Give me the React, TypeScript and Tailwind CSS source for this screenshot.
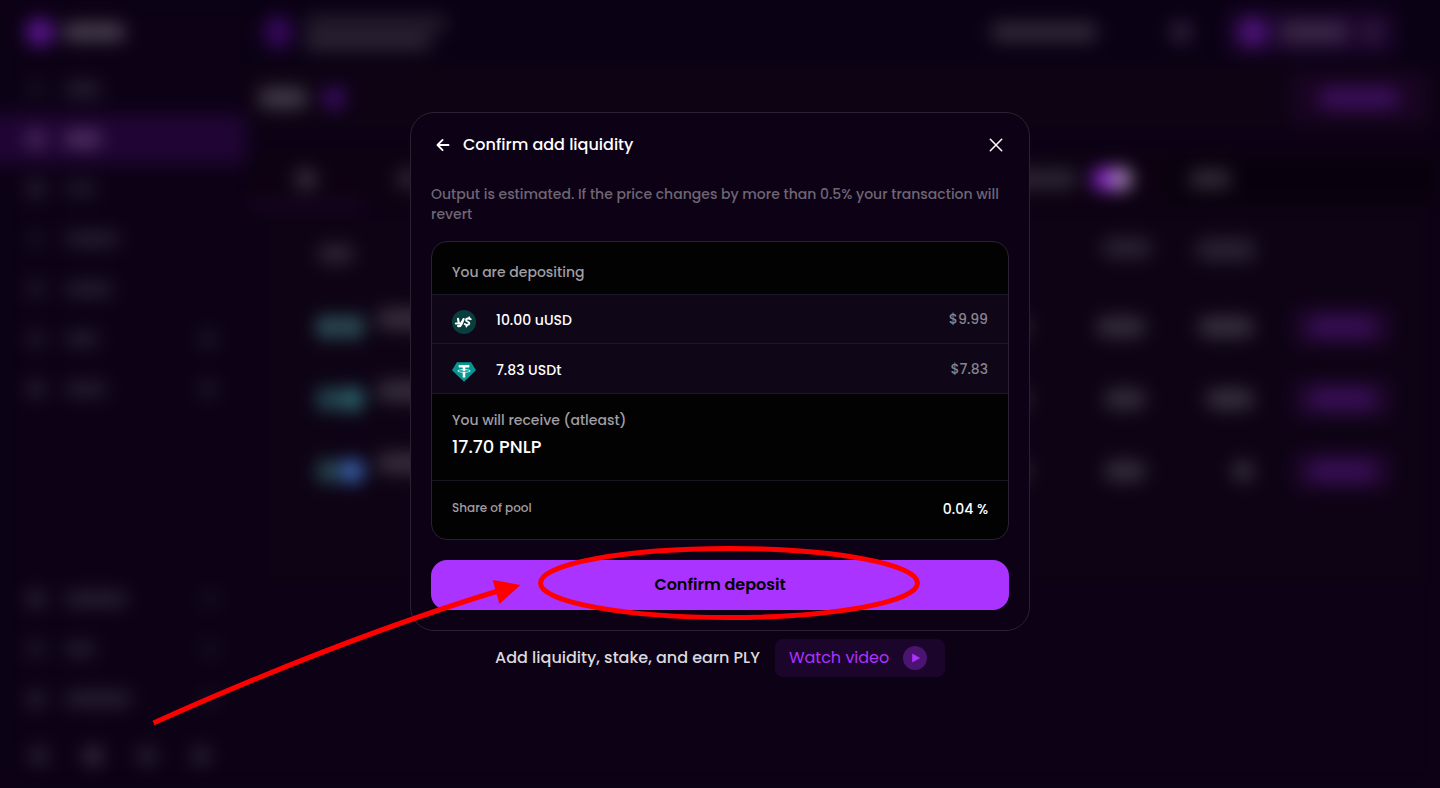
import React from "react";

type BarProps = { className: string };

/** Placeholder block used by the defocused page behind the dialog. */
function Bar({ className }: BarProps) {
  return <span className={`block shrink-0 rounded-full ${className}`} />;
}

const mainNav = [
  { icon: "bg-[#15101f]", label: "w-[38px] bg-[#251e2f]", chevron: false, active: false },
  { icon: "bg-[#4b2c60]", label: "w-[38px] bg-[#523466]", chevron: false, active: true },
  { icon: "bg-[#271f31]", label: "w-[34px] bg-[#1f1829]", chevron: false, active: false },
  { icon: "bg-[#15101f]", label: "w-[56px] bg-[#251d2f]", chevron: false, active: false },
  { icon: "bg-[#20182b]", label: "w-[50px] bg-[#251d2f]", chevron: false, active: false },
  { icon: "bg-[#20182b]", label: "w-[36px] bg-[#251d2f]", chevron: true, active: false },
  { icon: "bg-[#271f31]", label: "w-[44px] bg-[#251d2f]", chevron: true, active: false },
];

const footerNav = [
  { icon: "bg-[#2a2235]", label: "w-[64px] bg-[#281f31]" },
  { icon: "bg-[#20182b]", label: "w-[32px] bg-[#241d2e]" },
  { icon: "bg-[#271f31]", label: "w-[68px] bg-[#281f31]" },
];

const poolRows = [
  { left: "bg-[#2f555d]", right: "bg-[#2f555d]", a: "w-[50px]", b: "w-[56px]" },
  { left: "bg-[#254c54]", right: "bg-[#2e6a72]", a: "w-[42px]", b: "w-[48px]" },
  { left: "bg-[#284a52]", right: "bg-[#3c68b8]", a: "w-[42px]", b: "w-[22px]" },
];

function Backdrop() {
  return (
    <div aria-hidden="true" className="absolute inset-0 flex blur-[9px]">
      <aside className="flex w-[246px] shrink-0 flex-col bg-[#0c0115] pb-[22px]">
        <div className="flex h-16 items-center gap-2 pl-[26px]">
          <Bar className="size-7 bg-[#5a1590]" />
          <Bar className="h-[18px] w-16 bg-[#48404f]" />
        </div>
        <nav className="flex flex-col">
          {mainNav.map((item, i) => (
            <div
              key={i}
              className={`-ml-6 flex h-[50px] items-center pl-[50px] pr-[28px] ${item.active ? "bg-[#200534]" : ""}`}
            >
              <Bar className={`size-5 ${item.icon}`} />
              <Bar className={`ml-[18px] h-4 ${item.label}`} />
              {item.chevron && <Bar className="ml-auto size-5 bg-[#1e1728]" />}
            </div>
          ))}
        </nav>
        <div className="mt-auto flex flex-col">
          {footerNav.map((item, i) => (
            <div key={i} className="flex h-[50px] items-center pl-[26px] pr-[28px]">
              <Bar className={`size-5 ${item.icon}`} />
              <Bar className={`ml-[18px] h-4 ${item.label}`} />
              <Bar className="ml-auto size-4 bg-[#1b1425]" />
            </div>
          ))}
          <div className="mt-[22px] flex gap-[34px] pl-[29px]">
            <Bar className="size-5 bg-[#2b2234]" />
            <Bar className="size-5 bg-[#382e41]" />
            <Bar className="size-5 bg-[#2b2234]" />
            <Bar className="size-5 bg-[#2b2234]" />
          </div>
        </div>
      </aside>

      <div className="flex min-w-0 flex-1 flex-col bg-[#0c0115]">
        <header className="flex h-16 items-center bg-[#0a0114] pl-[18px] pr-[45px]">
          <Bar className="h-[34px] w-7 bg-[#35085a]" />
          <div className="ml-3 flex flex-col gap-[3px]">
            <Bar className="h-4 w-[144px] bg-[#251d2c]" />
            <Bar className="h-4 w-[128px] bg-[#2e2535]" />
          </div>
          <Bar className="ml-auto h-5 w-[108px] bg-[#302737]" />
          <Bar className="ml-[71px] size-6 bg-[#2b1c38]" />
          <div className="ml-[34px] flex h-11 w-[168px] items-center gap-3 rounded-lg bg-[#1c052c] pl-3">
            <Bar className="size-7 bg-[#4f147c]" />
            <Bar className="h-5 w-[70px] bg-[#3a2947]" />
            <Bar className="h-5 w-5 bg-[#301e3f]" />
          </div>
        </header>

        <div className="flex h-[68px] items-center bg-[#0d0313] pl-3 pr-3">
          <Bar className="h-5 w-[50px] bg-[#433b4a]" />
          <Bar className="ml-[14px] size-6 bg-[#3a0b62]" />
          <div className="ml-auto flex h-[50px] w-[138px] items-center justify-center rounded-lg bg-[#190422]">
            <Bar className="h-5 w-[82px] bg-[#3b0f5c]" />
          </div>
        </div>

        <div className="mt-[18px] flex h-[58px] items-center bg-[#0c0211]">
          <div className="flex h-[58px] w-[120px] items-center justify-center border-b-8 border-[#1c0528] pt-2">
            <Bar className="size-[22px] bg-[#382f3f]" />
          </div>
          <Bar className="ml-[30px] h-5 w-[24px] bg-[#302737]" />
          <Bar className="ml-auto h-5 w-[70px] bg-[#2d2534]" />
          <div className="ml-[14px] flex h-[22px] w-10 items-center justify-end rounded-full bg-[#8f28d4]">
            <Bar className="size-[22px] bg-[#a98ab8]" />
          </div>
          <div className="ml-[38px] mr-2 flex h-10 w-[262px] items-center rounded-lg bg-[#08010c] pl-[18px]">
            <Bar className="h-[18px] w-11 bg-[#342d38]" />
          </div>
        </div>

        <div className="mx-4 mt-2 flex flex-col bg-[#0d0314]">
          <div className="flex h-[75px] items-center pl-[56px] pr-[168px]">
            <Bar className="h-[18px] w-9 bg-[#2f2636]" />
            <Bar className="mb-3 ml-auto h-[18px] w-[50px] bg-[#2d2535]" />
            <Bar className="mb-2 ml-[44px] h-[22px] w-[60px] bg-[#2a2332]" />
          </div>
          {poolRows.map((row, i) => (
            <div key={i} className="flex h-[72px] items-center pl-[54px] pr-[32px]">
              <Bar className={`size-6 ${row.left}`} />
              <Bar className={`size-6 ${row.right}`} />
              <Bar className="mb-4 ml-[12px] h-5 w-[60px] bg-[#382f3e]" />
              <Bar className="ml-auto h-5 w-5 bg-[#322938]" />
              <div className="ml-[66px] flex w-[50px] justify-end">
                <Bar className={`h-5 bg-[#352d3c] ${row.a}`} />
              </div>
              <div className="ml-[52px] flex w-[56px] justify-end">
                <Bar className={`h-5 bg-[#38303f] ${row.b}`} />
              </div>
              <div className="ml-[38px] flex h-10 w-[100px] items-center justify-center rounded-lg bg-[#1c0528]">
                <Bar className="h-5 w-[68px] bg-[#390f58]" />
              </div>
            </div>
          ))}
          <div className="h-[76px]" />
        </div>
      </div>
    </div>
  );
}

function UusdIcon() {
  return (
    <svg viewBox="0 0 24 24" className="size-6" aria-hidden="true">
      <circle cx="12" cy="12" r="12" fill="#083f3e" />
      <g fill="none" stroke="#fff" strokeLinecap="round" strokeLinejoin="round">
        <path d="M6 8.800l.7 3.900c.2 1.200 2.400.9 3.100-.5L11.600 9M11.600 9l-1.900 4.800c-.7 1.800-2.100 2.600-3.700 2.200" strokeWidth="2.100" />
        <path d="M3.800 13.500h2.600" strokeWidth="1.900" />
        <path d="M18.700 9.200c-1.300-1-4.700-.9-4.600 1 .1 1.600 3.500 1.200 3.200 3.100-.2 1.900-3.300 2-4.600.8" strokeWidth="2" />
        <path d="M17.300 7.200l-.4 1.200M14.800 15.200l-.4 1.400" strokeWidth="1.700" />
      </g>
    </svg>
  );
}

function UsdtIcon() {
  return (
    <svg viewBox="0 0 24 24" className="size-6" aria-hidden="true">
      <path d="M4.900 2.200h14.200L24 10.200 12 21.800 0 10.200z" fill="#069792" />
      <path
        d="M6.700 5.100h10.600v2.500h-4v1.700c3 .15 5.200.8 5.200 1.600s-2.200 1.450-5.200 1.600v4.900h-2.600v-4.900c-3-.15-5.200-.8-5.200-1.600s2.200-1.450 5.200-1.600V7.600h-4z"
        fill="#fff"
      />
      <path
        d="M10.700 10c-2.500.1-4.300.5-4.300.9 0 .5 2.500.9 5.600.9s5.600-.4 5.600-.9c0-.4-1.800-.8-4.300-.9v1c-.8.060-1.800.060-2.600 0z"
        fill="#069792"
      />
    </svg>
  );
}

const deposits = [
  { icon: <UusdIcon />, amount: "10.00 uUSD", value: "$9.99", row: "h-[49px]" },
  { icon: <UsdtIcon />, amount: "7.83 USDt", value: "$7.83", row: "h-[50px]" },
];

/** Red ellipse around the confirm button and the arrow leading to it. */
function Callout() {
  return (
    <svg
      aria-hidden="true"
      viewBox="0 0 620 620"
      className="pointer-events-none absolute left-0 top-0 h-[620px] w-[620px] overflow-visible"
    >
      <ellipse cx="319" cy="471" rx="188.500" ry="34.500" fill="none" stroke="#ff0000" strokeWidth="5" />
      <path d="M-256.500 611Q-69 527 88 479" fill="none" stroke="#ff0000" strokeWidth="5" />
      <path d="M82.700 468L110.500 473 89.500 492z" fill="#ff0000" />
    </svg>
  );
}

export default function App() {
  return (
    <div className="relative min-h-screen overflow-hidden bg-[#0c0115] font-['Poppins','Inter',sans-serif] font-medium text-white">
      <Backdrop />
      <main className="relative flex flex-col items-center px-4 pb-4 pt-28">
        <div className="relative w-full max-w-[620px]">
          <section
            role="dialog"
            aria-labelledby="dialog-title"
            className="rounded-3xl border border-[#2a2131] bg-[#0d0116] p-5"
          >
            <header className="flex h-6 items-center">
              <button type="button" aria-label="Back" className="flex size-6 items-center justify-center">
                <svg viewBox="0 0 14 14" className="size-[14px]" fill="none" stroke="#fff" strokeWidth="1.900" strokeLinecap="round" strokeLinejoin="round" aria-hidden="true">
                  <path d="M12.500 7H1.600M6.600 1.900L1.500 7l5.100 5.100" />
                </svg>
              </button>
              <h1 id="dialog-title" className="ml-2 text-base font-medium">
                Confirm add liquidity
              </h1>
              <button type="button" aria-label="Close" className="ml-auto flex size-[26px] items-center justify-center">
                <svg viewBox="0 0 14 14" className="size-[14px]" fill="none" stroke="#fff" strokeWidth="1.500" strokeLinecap="round" aria-hidden="true">
                  <path d="M1.300 1.300l11.400 11.400M12.700 1.300L1.300 12.700" />
                </svg>
              </button>
            </header>

            <p className="mt-[27px] text-sm leading-5 text-[#6d6673]">
              Output is estimated. If the price changes by more than 0.5% your transaction will revert
            </p>

            <div className="mt-[17px] overflow-hidden rounded-2xl border border-[#2a2131] bg-[#020203]">
              <h2 className="flex h-[53px] items-center border-b border-[#1d1825] px-5 pt-2 text-sm text-[#a09da3]">
                You are depositing
              </h2>
              <ul>
                {deposits.map((d) => (
                  <li key={d.amount} className={`flex items-center border-b border-[#1d1825] bg-[#0f0618] px-5 ${d.row}`}>
                    <span className="mt-[6px]">{d.icon}</span>
                    <span className="ml-5 mt-[2px] text-sm">{d.amount}</span>
                    <span className="ml-auto text-sm text-[#88838d]">{d.value}</span>
                  </li>
                ))}
              </ul>
              <div className="h-[87px] border-b border-[#1a1620] px-5 pt-4">
                <p className="text-sm leading-5 text-[#a09da3]">You will receive (atleast)</p>
                <p className="mt-[3px] text-lg leading-7">17.70 PNLP</p>
              </div>
              <div className="flex h-[58px] items-center justify-between px-5 pb-[2px]">
                <span className="pb-[2px] text-xs text-[#a09da3]">Share of pool</span>
                <span className="text-sm">0.04 %</span>
              </div>
            </div>

            <button
              type="button"
              className="mt-5 flex h-[50px] w-full items-center justify-center rounded-2xl bg-[#ab33ff] text-base font-semibold text-black"
            >
              Confirm deposit
            </button>
          </section>
          <Callout />
        </div>

        <div className="mt-2 flex items-center gap-[15px]">
          <p className="text-base text-[#dbd9dc]">Add liquidity, stake, and earn PLY</p>
          <a href="#video" className="flex h-[38px] w-[170px] items-center justify-between rounded-lg bg-[#1c052b] pl-[14px] pr-[18px] text-base font-normal text-[#ab33ff]">
            Watch video
            <svg viewBox="0 0 24 24" className="size-6" aria-hidden="true">
              <circle cx="12" cy="12" r="12" fill="#4b1472" />
              <path d="M9.500 8v8l7.200-4z" fill="#ab33ff" stroke="#ab33ff" strokeWidth=".6" strokeLinejoin="round" />
            </svg>
          </a>
        </div>
      </main>
    </div>
  );
}
